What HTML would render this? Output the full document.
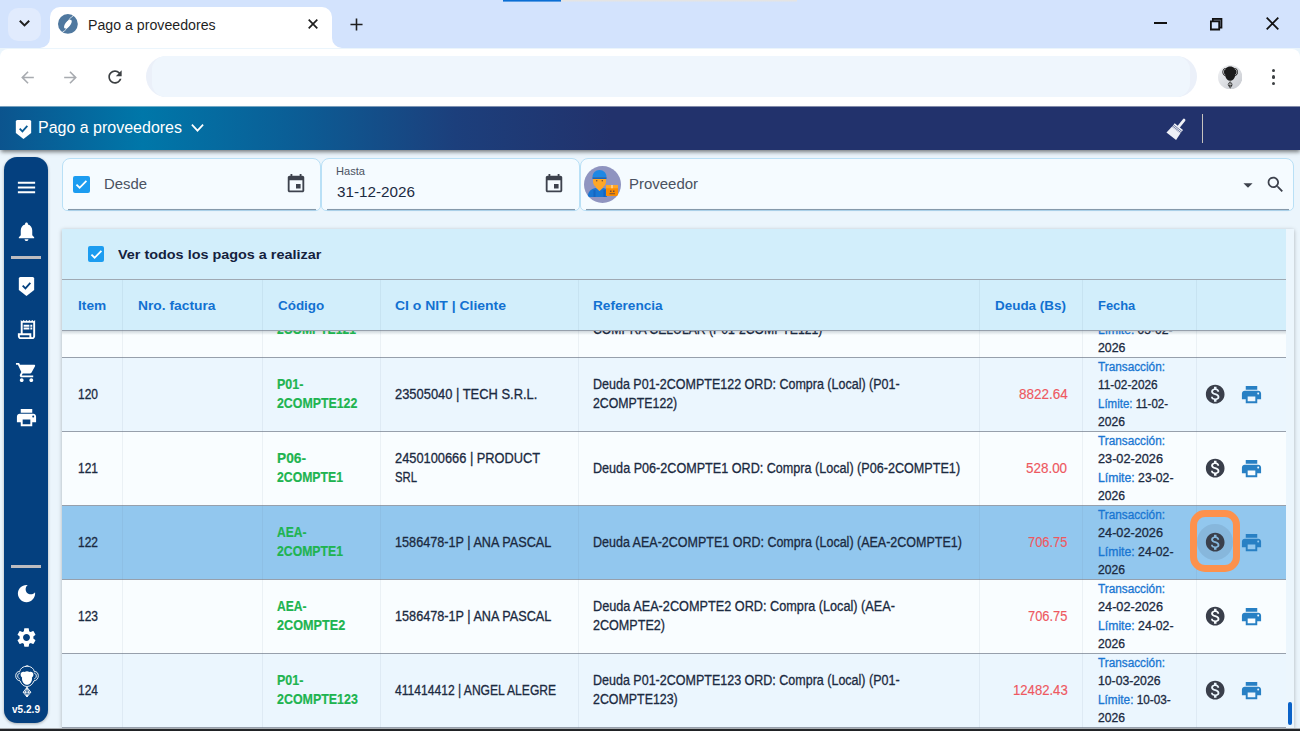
<!DOCTYPE html>
<html lang="es">
<head>
<meta charset="utf-8">
<title>Pago a proveedores</title>
<style>
*{box-sizing:border-box;margin:0;padding:0}
html,body{width:1300px;height:731px;overflow:hidden}
body{position:relative;background:#ebf5fc;font-family:"Liberation Sans",sans-serif;color:#1b2a41}
.abs{position:absolute}
.t{position:absolute;white-space:nowrap;transform-origin:0 50%;line-height:1}
svg{position:absolute;display:block}
#strip{left:0;top:0;width:1300px;height:48px;background:#d3e3fd}
#toolbar{left:0;top:48.500px;width:1300px;height:58px;background:#fff;border-radius:8px 8px 0 0}
#url{left:146.200px;top:55.800px;width:1051.200px;height:41.500px;border-radius:21px;background:#ebf0f9}
#tab{left:50px;top:7px;width:282px;height:41px;background:#fff;border-radius:10px 10px 0 0}
#tabsearch{left:8px;top:8px;width:33px;height:33px;border-radius:10px;background:#e1ebfd}
#hdr{left:0;top:107px;width:1300px;height:43px;background:linear-gradient(90deg,#0b548e 0%,#0077a9 11%,#0a5f97 22%,#1c3f7c 35%,#22326c 47%,#22326c 100%);box-shadow:0 2.500px 4px -.5px rgba(0,0,0,.5)}
#hdr0{left:0;top:106px;width:1300px;height:1px;background:linear-gradient(90deg,#0b548e 0%,#0077a9 11%,#0a5f97 22%,#1c3f7c 35%,#22326c 47%,#22326c 100%);opacity:.55}
#side{left:4px;top:157px;width:44px;height:566px;background:#04407f;border-radius:13px;box-shadow:0 1px 3px rgba(0,0,0,.3)}
.fld{position:absolute;top:158.300px;height:52.500px;background:#f5fbff;border:1px solid #b9e0f6;border-radius:8px 8px 5px 5px}
.fld::after{content:"";position:absolute;left:4.500px;right:4.500px;bottom:-.7px;height:1.900px;background:linear-gradient(#8f99a3,#7b99b2);box-shadow:0 .5px 1px rgba(120,150,180,.45)}
.cb{position:absolute;width:16.500px;height:16.500px;border-radius:2px;background:#1c9cf0}
#card{left:62px;top:228.500px;width:1231.600px;height:499.500px;background:#ecf6fd;box-shadow:0 1px 4px rgba(0,0,0,.28)}
.b,.f{-webkit-text-stroke:.3px currentColor}
.g{-webkit-text-stroke:.2px currentColor}
.r{-webkit-text-stroke:.15px currentColor}
</style>
</head>
<body>
<div class="abs" id="strip"></div>
<div class="abs" style="left:503px;top:0;width:58.400px;height:2px;background:linear-gradient(#0a6ed4 50%,rgba(10,110,212,.6) 50%)"></div>
<div class="abs" style="left:561.400px;top:0;width:235.600px;height:2px;background:linear-gradient(#e4e4e4 50%,rgba(228,228,228,.5) 50%)"></div>
<div class="abs" id="tabsearch"></div>
<svg style="left:17px;top:17px" width="15" height="13" viewBox="0 0 15 13"><path fill="none" stroke="#1f1f1f" stroke-width="2" d="M2.800 3.700l4.700 4.700 4.700-4.700"/></svg>
<div class="abs" id="tab"></div>
<svg style="left:40px;top:38px" width="10" height="10" viewBox="0 0 10 10"><path fill="#fff" d="M10 0v10H0A10 10 0 0 0 10 0z"/></svg>
<svg style="left:332px;top:38px" width="10" height="10" viewBox="0 0 10 10"><path fill="#fff" d="M0 0v10h10A10 10 0 0 1 0 0z"/></svg>
<div class="abs" id="toolbar"></div>
<div class="abs" id="url"></div>
<div class="abs" style="left:151.500px;top:55.800px;width:1038px;height:41.500px;border-radius:14px;background:#eff6fd"></div>
<svg style="left:58.300px;top:14.200px" width="19.800" height="19.800" viewBox="0 0 20 20"><circle cx="10" cy="10" r="10" fill="#4f789f"/><ellipse cx="10" cy="10.200" rx="5.400" ry="2.500" fill="#fff" transform="rotate(-51 10 10.200)"/><path stroke="#fff" stroke-width=".8" fill="none" d="M16 1.300C13 3 10.500 6 9.500 9M4.600 18.200C7.500 16.800 9.700 14 10.600 11.200"/></svg>
<span class="t " style="left:88.1px;top:18.17px;font-size:14px;color:#1f1f1f;transform:scaleX(1.0119);">Pago a proveedores</span>
<svg style="left:307px;top:18px" width="12" height="12" viewBox="0 0 12 12"><path stroke="#1f1f1f" stroke-width="1.700" d="M1.700 1.700l8.600 8.600M10.300 1.700l-8.600 8.600"/></svg>
<svg style="left:349.500px;top:17.500px" width="13" height="13" viewBox="0 0 14 14"><path stroke="#1f1f1f" stroke-width="1.700" d="M7 .5v13M.5 7h13"/></svg>
<div class="abs" style="left:1154.200px;top:22.200px;width:12.800px;height:1.900px;background:#111"></div>
<svg style="left:1208.800px;top:16.800px" width="14.400" height="14.400" viewBox="0 0 14.400 14.400"><path fill="#7a8596" stroke="#111" stroke-width="1.700" d="M3.800 1.900h8.700v8.700H3.800z"/><path fill="#d3e3fd" stroke="#111" stroke-width="1.800" d="M1.900 4.400h8.300v8.100H1.900z"/></svg>
<svg style="left:1266px;top:17.300px" width="13" height="13" viewBox="0 0 13 13"><path stroke="#111" stroke-width="1.800" d="M.7.700l11.600 11.600M12.300.700L.700 12.300"/></svg>
<svg style="left:17.50px;top:67.50px" width="19" height="19" viewBox="0 0 24 24"><path fill="#a8abb0" d="M20 11H7.83l5.59-5.59L12 4l-8 8 8 8 1.41-1.41L7.83 13H20v-2z"/></svg>
<svg style="left:60.50px;top:67.50px" width="19" height="19" viewBox="0 0 24 24"><path fill="#a8abb0" d="M12 4l-1.41 1.41L16.17 11H4v2h12.17l-5.58 5.59L12 20l8-8z"/></svg>
<svg style="left:104.50px;top:67.00px" width="20" height="20" viewBox="0 0 24 24"><path fill="#3c4043" d="M17.65 6.35C16.2 4.9 14.21 4 12 4c-4.42 0-7.99 3.58-7.990 8s3.570 8 7.990 8c3.730 0 6.840-2.550 7.730-6h-2.080c-.82 2.330-3.040 4-5.650 4-3.310 0-6-2.690-6-6s2.690-6 6-6c1.660 0 3.140.69 4.220 1.780L13 11h7V4l-2.350 2.350z"/></svg>
<svg style="left:1217.600px;top:64.500px" width="24.400" height="24.400" viewBox="0 0 24 24"><defs><linearGradient id="ag" x1="0" y1="0" x2="1" y2="1"><stop offset="0" stop-color="#f3f4f6"/><stop offset="1" stop-color="#c6c9cf"/></linearGradient></defs><circle cx="12" cy="12" r="12" fill="url(#ag)"/><path fill="#1b1b1b" d="M12 1.400c-1.700 0-3.100.6-4.100 1.600C5.800 2.900 4.300 4.600 4.300 7c0 2 1.200 3.500 2.900 4.100.6 2.700 2.500 4.500 4.800 4.500s4.200-1.800 4.800-4.500c1.700-.6 2.900-2.100 2.900-4.100 0-2.400-1.500-4.100-3.600-4-1-1-2.400-1.600-4.100-1.600z"/><path fill="none" stroke="#e4e5e8" stroke-width=".7" d="M7.600 3.800C6 4.200 5.400 5.500 5.400 6.900c0 1.400.7 2.400 1.800 3M16.400 3.800c1.600.4 2.200 1.700 2.200 3.100 0 1.400-.7 2.400-1.800 3"/><path fill="#2a2a2a" d="M12 15.800l2.600 3.400L12 23.400l-2.600-4.200z"/><path fill="none" stroke="#d8d9dc" stroke-width=".5" d="M9.400 19.200h5.200M12 15.800v7.600M10.700 17.500l1.300 1.700 1.300-1.700"/></svg>
<div class="abs" style="left:1272px;top:68.9px;width:3.400px;height:3.400px;border-radius:50%;background:#3c4043"></div>
<div class="abs" style="left:1272px;top:75.4px;width:3.400px;height:3.400px;border-radius:50%;background:#3c4043"></div>
<div class="abs" style="left:1272px;top:82.0px;width:3.400px;height:3.400px;border-radius:50%;background:#3c4043"></div>
<div class="abs" id="hdr0"></div>
<div class="abs" id="hdr"></div>
<svg style="left:12.40px;top:117.60px" width="23" height="23" viewBox="0 0 24 24"><path fill="#fff" d="M5.600 2h12.800A1.600 1.600 0 0 1 20 3.600V15.600L12 22l-8-6.400V3.600A1.600 1.600 0 0 1 5.600 2z"/><path fill="none" stroke="#0a5c95" stroke-width="1.900" d="M8 11l2.900 2.900L16 8.300"/></svg>
<span class="t " style="left:37.6px;top:120.48px;font-size:16px;color:#fff;transform:scaleX(0.9992);">Pago a proveedores</span>
<svg style="left:190px;top:122px" width="15" height="13" viewBox="0 0 15 13"><path fill="none" stroke="#fff" stroke-width="1.700" d="M1.900 2.700l5.600 6 5.600-6"/></svg>
<svg style="left:1156.600px;top:109.100px;overflow:visible" width="40" height="40" viewBox="-20 -20 40 40"><g transform="rotate(38)" fill="#eef0f6"><rect x="-1.400" y="-12.800" width="2.800" height="11" rx="1.400"/><path d="M-5.300 -3h10.600v4.500h-10.600z"/><path d="M-5.400 1.500h10.800l.7 7.800h-12.200z"/><path fill="none" stroke="#22326c" stroke-width=".55" d="M-5.300-1.100h10.600M-5.300 .400h10.600"/></g></svg>
<div class="abs" style="left:1201.600px;top:113.700px;width:1.700px;height:29.200px;background:#c6c3be"></div>
<div class="abs" id="side"></div>
<svg style="left:15.00px;top:175.80px" width="23" height="23" viewBox="0 0 24 24"><path fill="#fff" d="M3 18h18v-2H3v2zm0-5h18v-2H3v2zm0-7v2h18V6H3z"/></svg>
<svg style="left:15.00px;top:220.00px" width="23" height="23" viewBox="0 0 24 24"><path fill="#fff" d="M12 22c1.1 0 2-.9 2-2h-4c0 1.1.89 2 2 2zm6-6v-5c0-3.07-1.64-5.64-4.5-6.320V4c0-.83-.67-1.500-1.500-1.500s-1.500.67-1.500 1.500v.68C7.630 5.360 6 7.920 6 11v5l-2 2v1h16v-1l-2-2z"/></svg>
<div class="abs" style="left:11px;top:256px;width:30px;height:3px;background:#bdbcc0"></div>
<svg style="left:15.00px;top:274.80px" width="23" height="23" viewBox="0 0 24 24"><path fill="#fff" d="M5.600 2h12.800A1.600 1.600 0 0 1 20 3.600V15.600L12 22l-8-6.400V3.600A1.600 1.600 0 0 1 5.600 2z"/><path fill="none" stroke="#04407f" stroke-width="1.900" d="M8 11l2.900 2.900L16 8.300"/></svg>
<svg style="left:15.00px;top:317.50px" width="23" height="23" viewBox="0 0 24 24"><path fill="#fff" d="M19.500 3.500L18 2l-1.500 1.500L15 2l-1.500 1.500L12 2l-1.500 1.500L9 2 7.500 3.500 6 2v14H3v3c0 1.660 1.340 3 3 3h12c1.660 0 3-1.340 3-3V2l-1.500 1.500zM15 20H6c-.55 0-1-.45-1-1v-1h10v2zm4-1c0 .55-.45 1-1 1s-1-.45-1-1v-3H8V5h11v14z M9 7h6v2H9zm7 0h2v2h-2zm-7 3h6v2H9zm7 0h2v2h-2z"/></svg>
<svg style="left:14.60px;top:361.30px" width="23" height="23" viewBox="0 0 24 24"><path fill="#fff" d="M7 18c-1.100 0-1.990.9-1.990 2S5.900 22 7 22s2-.9 2-2-.9-2-2-2zM1 2v2h2l3.600 7.590-1.350 2.450c-.16.28-.25.61-.25.96 0 1.100.9 2 2 2h12v-2H7.420c-.14 0-.25-.11-.25-.25l.03-.12.9-1.630h7.450c.75 0 1.410-.41 1.750-1.030l3.580-6.490c.08-.14.12-.31.12-.48 0-.55-.45-1-1-1H5.210l-.94-2H1zm16 16c-1.100 0-1.990.9-1.990 2s.89 2 1.990 2 2-.9 2-2-.9-2-2-2z"/></svg>
<svg style="left:15.00px;top:405.80px" width="23" height="23" viewBox="0 0 24 24"><path fill="#fff" d="M19 8H5c-1.66 0-3 1.34-3 3v6h4v4h12v-4h4v-6c0-1.66-1.34-3-3-3zm-3 11H8v-5h8v5zm3-7c-.55 0-1-.45-1-1s.45-1 1-1 1 .45 1 1-.45 1-1 1zm-1-9H6v4h12V3z"/></svg>
<div class="abs" style="left:11px;top:565px;width:30px;height:3px;background:#bdbcc0"></div>
<svg style="left:15.00px;top:582.40px" width="23" height="23" viewBox="0 0 24 24"><path fill="#fff" d="M12 3c-4.970 0-9 4.030-9 9s4.030 9 9 9 9-4.030 9-9c0-.46-.04-.92-.1-1.360-.98 1.370-2.580 2.260-4.400 2.260-2.980 0-5.400-2.420-5.400-5.400 0-1.810.89-3.420 2.260-4.400-.44-.06-.9-.1-1.360-.1z"/></svg>
<svg style="left:15.00px;top:626.40px" width="23" height="23" viewBox="0 0 24 24"><path fill="#fff" d="M19.140 12.940c.04-.3.060-.61.060-.94 0-.32-.02-.64-.07-.94l2.030-1.580c.18-.14.23-.41.120-.61l-1.920-3.320c-.12-.22-.37-.29-.59-.22l-2.390.96c-.5-.38-1.030-.7-1.620-.94l-.36-2.540c-.04-.24-.24-.41-.48-.41h-3.840c-.24 0-.43.17-.47.41l-.36 2.540c-.59.24-1.130.57-1.620.94l-2.390-.96c-.22-.08-.47 0-.59.220L2.740 8.870c-.12.21-.08.47.120.61l2.030 1.580c-.05.3-.09.63-.09.940s.02.640.07.940l-2.030 1.580c-.18.140-.23.410-.120.610l1.920 3.320c.12.220.37.290.59.220l2.390-.96c.5.380 1.030.7 1.620.94l.36 2.540c.05.240.24.410.48.410h3.840c.24 0 .44-.17.470-.41l.36-2.540c.59-.24 1.130-.56 1.620-.94l2.390.96c.22.080.47 0 .59-.22l1.920-3.320c.12-.22.070-.47-.12-.61l-2.010-1.580zM12 15.600c-1.980 0-3.600-1.620-3.600-3.600s1.620-3.600 3.600-3.600 3.600 1.620 3.600 3.600-1.620 3.600-3.600 3.600z"/></svg>
<svg style="left:14.500px;top:665px" width="24" height="32.500" viewBox="0 0 24 32.500"><g fill="none" stroke="#fff" stroke-width=".9"><path d="M12 1.200c-4 0-6.800 2.300-7.300 5.300C2.300 6.300.700 8.200.700 10.800c0 2.800 1.800 4.800 4.300 5 1.300 3.500 3.900 5.700 7 5.700s5.700-2.200 7-5.700c2.500-.2 4.300-2.200 4.300-5 0-2.600-1.600-4.500-4-4.300C18.800 3.500 16 1.200 12 1.200z"/><path d="M5.200 8c-1.600.2-2.500 1.300-2.500 2.900 0 1.500.8 2.600 2 3M18.800 8c1.600.2 2.500 1.300 2.500 2.900 0 1.500-.8 2.600-2 3"/><path d="M10 1.800c1-.9 2.400-1.300 3.300-1"/><path d="M12 22.300l-3.800 4.900L12 32l3.800-4.800zM8.200 27.200h7.600M12 22.300l-1.600 4.900L12 32l1.600-4.800z"/></g><path fill="#fff" d="M12 6.300c-.9 0-1.700.3-2.300.8-.4-.2-.8-.3-1.300-.3C6.800 6.800 5.600 8 5.600 9.700c0 1.200.6 2.200 1.500 2.700-.1.500-.1.900-.1 1.400 0 3.300 2.200 6 5 6s5-2.700 5-6c0-.5 0-.9-.1-1.400.9-.5 1.500-1.500 1.500-2.700 0-1.700-1.200-2.900-2.800-2.900-.5 0-.9.100-1.300.3-.6-.5-1.400-.8-2.300-.8z"/></svg>
<span class="t " style="left:12.3px;top:704.55px;font-size:10px;color:#fff;font-weight:700;transform:scaleX(1.0067);">v5.2.9</span>
<div class="fld" style="left:62px;width:259px"></div>
<div class="fld" style="left:321px;width:259px"></div>
<div class="fld" style="left:580px;width:714.300px"></div>
<div class="cb" style="left:73px;top:176px"><svg style="left:0;top:0" width="16.500" height="16.500" viewBox="0 0 24 24"><path fill="none" stroke="#fff" stroke-width="2.600" d="M5 12.500l4.600 4.600L19.500 7"/></svg></div>
<span class="t " style="left:103.5px;top:176.75px;font-size:14.5px;color:#4a5261;transform:scaleX(1.0257);">Desde</span>
<svg style="left:285.00px;top:173.40px" width="22" height="22" viewBox="0 0 24 24"><path fill="#3d424d" d="M17 12h-5v5h5v-5zM16 1v2H8V1H6v2H5c-1.11 0-1.99.9-1.99 2L3 19c0 1.1.89 2 2 2h14c1.1 0 2-.9 2-2V5c0-1.1-.9-2-2-2h-1V1h-2zm3 18H5V8h14v11z"/></svg>
<span class="t " style="left:336px;top:165.71px;font-size:11px;color:#4a5261;transform:scaleX(1.0087);">Hasta</span>
<span class="t " style="left:336.5px;top:184.32px;font-size:15px;color:#1b2a41;transform:scaleX(1.0165);">31-12-2026</span>
<svg style="left:543.00px;top:173.40px" width="22" height="22" viewBox="0 0 24 24"><path fill="#3d424d" d="M17 12h-5v5h5v-5zM16 1v2H8V1H6v2H5c-1.11 0-1.99.9-1.99 2L3 19c0 1.1.89 2 2 2h14c1.1 0 2-.9 2-2V5c0-1.1-.9-2-2-2h-1V1h-2zm3 18H5V8h14v11z"/></svg>
<svg style="left:583.800px;top:166px" width="37" height="37" viewBox="0 0 37 37"><defs><clipPath id="cp"><circle cx="18.500" cy="18.500" r="18.500"/></clipPath></defs><circle cx="18.500" cy="18.500" r="18.500" fill="#8f94c0"/><g clip-path="url(#cp)"><path fill="#1976d2" d="M4 30c0-5 4-7.500 8-8l3.500 3 3.500-3c1.500.2 3 .7 4 1.500V31H4z"/><path fill="#1565c0" d="M9.500 24h2v7h-2zm10 0h2v7h-2z"/><path fill="#ffa726" d="M12 21.500l3.500 3.500 3.500-3.500v-3h-7z"/><path fill="#ffa726" d="M9 11h13v4.500c0 3.600-2.900 6.500-6.500 6.500S9 19.100 9 15.500z"/><path fill="#1e88e5" d="M8.500 11c0-4 3-7 7-7s7 3 7 7v.5h-14z"/><path fill="#1565c0" d="M8.500 11.300h14V13h-14z"/><circle cx="12.700" cy="14.800" r=".8" fill="#6d4c41"/><circle cx="18.300" cy="14.800" r=".8" fill="#6d4c41"/><path fill="#fb8c00" d="M22 19h12v11H22z"/><path fill="#ffa726" d="M22 19h12v3.200H22z"/><path fill="#ffcc80" d="M27 19h2v3.200h-2z"/><path fill="#6d4c41" d="M26 24.500h1.500V26H26zm3 0h1.500V26H29zM25.500 27.300h5.500v.9h-5.500z"/></g></svg>
<span class="t " style="left:629px;top:176.75px;font-size:14.5px;color:#4a5261;transform:scaleX(1.0313);">Proveedor</span>
<svg style="left:1237.00px;top:173.50px" width="22" height="22" viewBox="0 0 24 24"><path fill="#3d424d" d="M7 10l5 5 5-5z"/></svg>
<svg style="left:1264.50px;top:174.00px" width="21" height="21" viewBox="0 0 24 24"><path fill="#3d424d" d="M15.5 14h-.79l-.28-.27C15.41 12.59 16 11.11 16 9.5 16 5.91 13.09 3 9.500 3S3 5.910 3 9.500 5.910 16 9.500 16c1.610 0 3.090-.59 4.230-1.570l.27.28v.79l5 4.990L20.490 19l-4.990-5zm-6 0C7.010 14 5 11.990 5 9.500S7.010 5 9.500 5 14 7.010 14 9.500 11.990 14 9.500 14z"/></svg>
<div class="abs" id="card"></div>
<div class="abs" style="left:62px;top:228.500px;width:1223.700px;height:499.500px;background:#d2eefb"></div>
<div class="abs" style="left:62px;top:331px;width:1224px;height:26px;background:#f9fdff"></div>
<div class="abs" style="left:62px;top:358px;width:1224px;height:73px;background:#ebf6fe"></div>
<div class="abs" style="left:62px;top:432px;width:1224px;height:73px;background:#f9fdff"></div>
<div class="abs" style="left:62px;top:506px;width:1224px;height:73px;background:#92c7ee"></div>
<div class="abs" style="left:62px;top:580px;width:1224px;height:73px;background:#f9fdff"></div>
<div class="abs" style="left:62px;top:654px;width:1224px;height:73px;background:#ebf6fe"></div>
<div class="abs" style="left:62px;top:727px;width:1224px;height:1px;background:#ebf6fe"></div>
<div class="abs" style="left:62px;top:279px;width:1224px;height:1px;background:#9fa9b3"></div>
<div class="abs" style="left:62px;top:330px;width:1224px;height:1px;background:#97a0ac"></div>
<div class="abs" style="left:62px;top:357px;width:1224px;height:1px;background:#97a0ac"></div>
<div class="abs" style="left:62px;top:431px;width:1224px;height:1px;background:#97a0ac"></div>
<div class="abs" style="left:62px;top:505px;width:1224px;height:1px;background:#97a0ac"></div>
<div class="abs" style="left:62px;top:579px;width:1224px;height:1px;background:#97a0ac"></div>
<div class="abs" style="left:62px;top:653px;width:1224px;height:1px;background:#97a0ac"></div>
<div class="abs" style="left:62px;top:727px;width:1224px;height:1px;background:#97a0ac"></div>
<div class="abs" style="left:62px;top:331px;width:1223.700px;height:4px;background:linear-gradient(rgba(60,80,100,.22),rgba(60,80,100,0))"></div>
<div class="abs" style="left:122px;top:280px;width:1px;height:448px;background:rgba(90,115,140,.085)"></div>
<div class="abs" style="left:262px;top:280px;width:1px;height:448px;background:rgba(90,115,140,.085)"></div>
<div class="abs" style="left:380px;top:280px;width:1px;height:448px;background:rgba(90,115,140,.085)"></div>
<div class="abs" style="left:578px;top:280px;width:1px;height:448px;background:rgba(90,115,140,.085)"></div>
<div class="abs" style="left:979px;top:280px;width:1px;height:448px;background:rgba(90,115,140,.085)"></div>
<div class="abs" style="left:1082px;top:280px;width:1px;height:448px;background:rgba(90,115,140,.085)"></div>
<div class="abs" style="left:1196px;top:280px;width:1px;height:448px;background:rgba(90,115,140,.085)"></div>
<div class="cb" style="left:87.600px;top:245.900px"><svg style="left:0;top:0" width="16.500" height="16.500" viewBox="0 0 24 24"><path fill="none" stroke="#fff" stroke-width="2.600" d="M5 12.500l4.600 4.600L19.500 7"/></svg></div>
<span class="t hd" style="left:118px;top:247.59px;font-size:13.5px;color:#14213d;font-weight:700;transform:scaleX(1.0668);">Ver todos los pagos a realizar</span>
<span class="t hd" style="left:78.1px;top:299.02px;font-size:13px;color:#1271d1;font-weight:700;transform:scaleX(1.0548);">Item</span>
<span class="t hd" style="left:138px;top:299.02px;font-size:13px;color:#1271d1;font-weight:700;transform:scaleX(1.0621);">Nro. factura</span>
<span class="t hd" style="left:277.8px;top:299.02px;font-size:13px;color:#1271d1;font-weight:700;transform:scaleX(1.032);">Código</span>
<span class="t hd" style="left:395px;top:299.02px;font-size:13px;color:#1271d1;font-weight:700;transform:scaleX(1.0744);">CI o NIT | Cliente</span>
<span class="t hd" style="left:593.2px;top:299.02px;font-size:13px;color:#1271d1;font-weight:700;transform:scaleX(1.0484);">Referencia</span>
<span class="t hd" style="left:995px;top:299.02px;font-size:13px;color:#1271d1;font-weight:700;transform:scaleX(1.0346);">Deuda (Bs)</span>
<span class="t hd" style="left:1098.1px;top:299.02px;font-size:13px;color:#1271d1;font-weight:700;transform:scaleX(0.9926);">Fecha</span>
<span class="t b" style="left:77.6px;top:387.17px;font-size:14px;color:#1b2a41;transform:scaleX(0.8562);">120</span>
<span class="t g" style="left:277.2px;top:377.17px;font-size:14px;color:#1eb450;font-weight:700;transform:scaleX(0.8926);">P01-</span><span class="t g" style="left:277.2px;top:396.17px;font-size:14px;color:#1eb450;font-weight:700;transform:scaleX(0.882);">2COMPTE122</span>
<span class="t b" style="left:395px;top:387.17px;font-size:14px;color:#1b2a41;transform:scaleX(0.9219);">23505040 | TECH S.R.L.</span>
<span class="t b" style="left:593.3px;top:377.17px;font-size:14px;color:#1b2a41;transform:scaleX(0.8938);">Deuda P01-2COMPTE122 ORD: Compra (Local) (P01-</span><span class="t b" style="left:593.3px;top:396.17px;font-size:14px;color:#1b2a41;transform:scaleX(0.8798);">2COMPTE122)</span>
<span class="t r" style="left:1018.5px;top:387.17px;font-size:14px;color:#ee5860;transform:scaleX(0.9642);">8822.64</span>
<span class="t f" style="left:1098.2px;top:360.86px;font-size:12px;color:#1976d2;transform:scaleX(0.9817);">Transacción:</span>
<span class="t f" style="left:1098.2px;top:378.86px;font-size:12px;color:#1b2a41;transform:scaleX(0.9868);">11-02-2026</span>
<span class="t f" style="left:1098.2px;top:397.86px;font-size:12px;color:#1b2a41;transform:scaleX(0.9569);"><span style="color:#1976d2">Límite:</span> 11-02-</span>
<span class="t f" style="left:1098.2px;top:415.86px;font-size:12px;color:#1b2a41;transform:scaleX(1.0111);">2026</span>
<svg style="left:1203.80px;top:383.20px" width="22.4" height="22.4" viewBox="0 0 24 24"><path fill="#3a3f4b" d="M12 2C6.48 2 2 6.48 2 12s4.48 10 10 10 10-4.48 10-10S17.52 2 12 2zm1.41 16.09V20h-2.67v-1.93c-1.71-.36-3.16-1.46-3.27-3.4h1.96c.1 1.05.82 1.87 2.65 1.87 1.96 0 2.4-.98 2.4-1.59 0-.83-.44-1.61-2.67-2.14-2.48-.6-4.18-1.62-4.18-3.67 0-1.72 1.39-2.84 3.11-3.21V4h2.67v1.95c1.86.45 2.79 1.86 2.85 3.39H14.3c-.05-1.11-.64-1.87-2.22-1.87-1.5 0-2.4.68-2.4 1.64 0 .84.65 1.39 2.67 1.91s4.18 1.39 4.18 3.91c-.01 1.83-1.38 2.83-3.12 3.16z"/></svg>
<svg style="left:1240.20px;top:382.70px" width="23" height="23" viewBox="0 0 24 24"><path fill="#2880c4" d="M19 8H5c-1.66 0-3 1.34-3 3v6h4v4h12v-4h4v-6c0-1.66-1.34-3-3-3zm-3 11H8v-5h8v5zm3-7c-.55 0-1-.45-1-1s.45-1 1-1 1 .45 1 1-.45 1-1 1zm-1-9H6v4h12V3z"/></svg>
<span class="t b" style="left:77.6px;top:461.17px;font-size:14px;color:#1b2a41;transform:scaleX(0.8562);">121</span>
<span class="t g" style="left:277.2px;top:451.17px;font-size:14px;color:#1eb450;font-weight:700;transform:scaleX(0.9805);">P06-</span><span class="t g" style="left:277.2px;top:470.17px;font-size:14px;color:#1eb450;font-weight:700;transform:scaleX(0.8745);">2COMPTE1</span>
<span class="t b" style="left:395px;top:451.17px;font-size:14px;color:#1b2a41;transform:scaleX(0.9161);">2450100666 | PRODUCT</span><span class="t b" style="left:395px;top:470.17px;font-size:14px;color:#1b2a41;transform:scaleX(0.8078);">SRL</span>
<span class="t b" style="left:593.3px;top:461.17px;font-size:14px;color:#1b2a41;transform:scaleX(0.9004);">Deuda P06-2COMPTE1 ORD: Compra (Local) (P06-2COMPTE1)</span>
<span class="t r" style="left:1026.2px;top:461.17px;font-size:14px;color:#ee5860;transform:scaleX(0.9596);">528.00</span>
<span class="t f" style="left:1098.2px;top:434.86px;font-size:12px;color:#1976d2;transform:scaleX(0.9817);">Transacción:</span>
<span class="t f" style="left:1098.2px;top:452.86px;font-size:12px;color:#1b2a41;transform:scaleX(1.0588);">23-02-2026</span>
<span class="t f" style="left:1098.2px;top:471.86px;font-size:12px;color:#1b2a41;transform:scaleX(1.0196);"><span style="color:#1976d2">Límite:</span> 23-02-</span>
<span class="t f" style="left:1098.2px;top:489.86px;font-size:12px;color:#1b2a41;transform:scaleX(1.0111);">2026</span>
<svg style="left:1203.80px;top:457.20px" width="22.4" height="22.4" viewBox="0 0 24 24"><path fill="#3a3f4b" d="M12 2C6.48 2 2 6.48 2 12s4.48 10 10 10 10-4.48 10-10S17.52 2 12 2zm1.41 16.09V20h-2.67v-1.93c-1.71-.36-3.16-1.46-3.27-3.4h1.96c.1 1.05.82 1.87 2.65 1.87 1.96 0 2.4-.98 2.4-1.59 0-.83-.44-1.61-2.67-2.14-2.48-.6-4.18-1.62-4.18-3.67 0-1.72 1.39-2.84 3.11-3.21V4h2.67v1.95c1.86.45 2.79 1.86 2.85 3.39H14.3c-.05-1.11-.64-1.87-2.22-1.87-1.5 0-2.4.68-2.4 1.64 0 .84.65 1.39 2.67 1.91s4.18 1.39 4.18 3.91c-.01 1.83-1.38 2.83-3.12 3.16z"/></svg>
<svg style="left:1240.20px;top:456.70px" width="23" height="23" viewBox="0 0 24 24"><path fill="#2880c4" d="M19 8H5c-1.66 0-3 1.34-3 3v6h4v4h12v-4h4v-6c0-1.66-1.34-3-3-3zm-3 11H8v-5h8v5zm3-7c-.55 0-1-.45-1-1s.45-1 1-1 1 .45 1 1-.45 1-1 1zm-1-9H6v4h12V3z"/></svg>
<span class="t b" style="left:77.6px;top:535.17px;font-size:14px;color:#1b2a41;transform:scaleX(0.8562);">122</span>
<span class="t g" style="left:277.2px;top:525.17px;font-size:14px;color:#1eb450;font-weight:700;transform:scaleX(0.8617);">AEA-</span><span class="t g" style="left:277.2px;top:544.17px;font-size:14px;color:#1eb450;font-weight:700;transform:scaleX(0.8745);">2COMPTE1</span>
<span class="t b" style="left:395px;top:535.17px;font-size:14px;color:#1b2a41;transform:scaleX(0.9045);">1586478-1P | ANA PASCAL</span>
<span class="t b" style="left:593.3px;top:535.17px;font-size:14px;color:#1b2a41;transform:scaleX(0.893);">Deuda AEA-2COMPTE1 ORD: Compra (Local) (AEA-2COMPTE1)</span>
<span class="t r" style="left:1027.8999999999999px;top:535.17px;font-size:14px;color:#ee5860;transform:scaleX(0.92);">706.75</span>
<span class="t f" style="left:1098.2px;top:508.86px;font-size:12px;color:#1976d2;transform:scaleX(0.9817);">Transacción:</span>
<span class="t f" style="left:1098.2px;top:526.86px;font-size:12px;color:#1b2a41;transform:scaleX(1.0588);">24-02-2026</span>
<span class="t f" style="left:1098.2px;top:545.86px;font-size:12px;color:#1b2a41;transform:scaleX(1.0196);"><span style="color:#1976d2">Límite:</span> 24-02-</span>
<span class="t f" style="left:1098.2px;top:563.86px;font-size:12px;color:#1b2a41;transform:scaleX(1.0111);">2026</span>
<div class="abs" style="left:1197px;top:524px;width:36px;height:36px;border-radius:50%;background:rgba(60,80,100,.13)"></div>
<svg style="left:1203.80px;top:531.20px" width="22.4" height="22.4" viewBox="0 0 24 24"><path fill="#3a3f4b" d="M12 2C6.48 2 2 6.48 2 12s4.48 10 10 10 10-4.48 10-10S17.52 2 12 2zm1.41 16.09V20h-2.67v-1.93c-1.71-.36-3.16-1.46-3.27-3.4h1.96c.1 1.05.82 1.87 2.65 1.87 1.96 0 2.4-.98 2.4-1.59 0-.83-.44-1.61-2.67-2.14-2.48-.6-4.18-1.62-4.18-3.67 0-1.72 1.39-2.84 3.11-3.21V4h2.67v1.95c1.86.45 2.79 1.86 2.85 3.39H14.3c-.05-1.11-.64-1.87-2.22-1.87-1.5 0-2.4.68-2.4 1.64 0 .84.65 1.39 2.67 1.91s4.18 1.39 4.18 3.91c-.01 1.83-1.38 2.83-3.12 3.16z"/></svg>
<svg style="left:1240.20px;top:530.70px" width="23" height="23" viewBox="0 0 24 24"><path fill="#2880c4" d="M19 8H5c-1.66 0-3 1.34-3 3v6h4v4h12v-4h4v-6c0-1.66-1.34-3-3-3zm-3 11H8v-5h8v5zm3-7c-.55 0-1-.45-1-1s.45-1 1-1 1 .45 1 1-.45 1-1 1zm-1-9H6v4h12V3z"/></svg>
<span class="t b" style="left:77.6px;top:609.17px;font-size:14px;color:#1b2a41;transform:scaleX(0.8562);">123</span>
<span class="t g" style="left:277.2px;top:599.17px;font-size:14px;color:#1eb450;font-weight:700;transform:scaleX(0.8617);">AEA-</span><span class="t g" style="left:277.2px;top:618.17px;font-size:14px;color:#1eb450;font-weight:700;transform:scaleX(0.9037);">2COMPTE2</span>
<span class="t b" style="left:395px;top:609.17px;font-size:14px;color:#1b2a41;transform:scaleX(0.9045);">1586478-1P | ANA PASCAL</span>
<span class="t b" style="left:593.3px;top:599.17px;font-size:14px;color:#1b2a41;transform:scaleX(0.9066);">Deuda AEA-2COMPTE2 ORD: Compra (Local) (AEA-</span><span class="t b" style="left:593.3px;top:618.17px;font-size:14px;color:#1b2a41;transform:scaleX(0.8986);">2COMPTE2)</span>
<span class="t r" style="left:1027.8999999999999px;top:609.17px;font-size:14px;color:#ee5860;transform:scaleX(0.92);">706.75</span>
<span class="t f" style="left:1098.2px;top:582.86px;font-size:12px;color:#1976d2;transform:scaleX(0.9817);">Transacción:</span>
<span class="t f" style="left:1098.2px;top:600.86px;font-size:12px;color:#1b2a41;transform:scaleX(1.0588);">24-02-2026</span>
<span class="t f" style="left:1098.2px;top:619.86px;font-size:12px;color:#1b2a41;transform:scaleX(1.0196);"><span style="color:#1976d2">Límite:</span> 24-02-</span>
<span class="t f" style="left:1098.2px;top:637.86px;font-size:12px;color:#1b2a41;transform:scaleX(1.0111);">2026</span>
<svg style="left:1203.80px;top:605.20px" width="22.4" height="22.4" viewBox="0 0 24 24"><path fill="#3a3f4b" d="M12 2C6.48 2 2 6.48 2 12s4.48 10 10 10 10-4.48 10-10S17.52 2 12 2zm1.41 16.09V20h-2.67v-1.93c-1.71-.36-3.16-1.46-3.27-3.4h1.96c.1 1.05.82 1.87 2.65 1.87 1.96 0 2.4-.98 2.4-1.59 0-.83-.44-1.61-2.67-2.14-2.48-.6-4.18-1.62-4.18-3.67 0-1.72 1.39-2.84 3.11-3.21V4h2.67v1.95c1.86.45 2.79 1.86 2.85 3.39H14.3c-.05-1.11-.64-1.87-2.22-1.87-1.5 0-2.4.68-2.4 1.64 0 .84.65 1.39 2.67 1.91s4.18 1.39 4.18 3.91c-.01 1.83-1.38 2.83-3.12 3.16z"/></svg>
<svg style="left:1240.20px;top:604.70px" width="23" height="23" viewBox="0 0 24 24"><path fill="#2880c4" d="M19 8H5c-1.66 0-3 1.34-3 3v6h4v4h12v-4h4v-6c0-1.66-1.34-3-3-3zm-3 11H8v-5h8v5zm3-7c-.55 0-1-.45-1-1s.45-1 1-1 1 .45 1 1-.45 1-1 1zm-1-9H6v4h12V3z"/></svg>
<span class="t b" style="left:77.6px;top:683.17px;font-size:14px;color:#1b2a41;transform:scaleX(0.8562);">124</span>
<span class="t g" style="left:277.2px;top:673.17px;font-size:14px;color:#1eb450;font-weight:700;transform:scaleX(0.8926);">P01-</span><span class="t g" style="left:277.2px;top:692.17px;font-size:14px;color:#1eb450;font-weight:700;transform:scaleX(0.8875);">2COMPTE123</span>
<span class="t b" style="left:395px;top:683.17px;font-size:14px;color:#1b2a41;transform:scaleX(0.8636);">411414412 | ANGEL ALEGRE</span>
<span class="t b" style="left:593.3px;top:673.17px;font-size:14px;color:#1b2a41;transform:scaleX(0.8935);">Deuda P01-2COMPTE123 ORD: Compra (Local) (P01-</span><span class="t b" style="left:593.3px;top:692.17px;font-size:14px;color:#1b2a41;transform:scaleX(0.885);">2COMPTE123)</span>
<span class="t r" style="left:1012.5999999999999px;top:683.17px;font-size:14px;color:#ee5860;transform:scaleX(0.9365);">12482.43</span>
<span class="t f" style="left:1098.2px;top:656.86px;font-size:12px;color:#1976d2;transform:scaleX(0.9817);">Transacción:</span>
<span class="t f" style="left:1098.2px;top:674.86px;font-size:12px;color:#1b2a41;transform:scaleX(1.0181);">10-03-2026</span>
<span class="t f" style="left:1098.2px;top:693.86px;font-size:12px;color:#1b2a41;transform:scaleX(0.9832);"><span style="color:#1976d2">Límite:</span> 10-03-</span>
<span class="t f" style="left:1098.2px;top:711.86px;font-size:12px;color:#1b2a41;transform:scaleX(1.0111);">2026</span>
<svg style="left:1203.80px;top:679.20px" width="22.4" height="22.4" viewBox="0 0 24 24"><path fill="#3a3f4b" d="M12 2C6.48 2 2 6.48 2 12s4.48 10 10 10 10-4.48 10-10S17.52 2 12 2zm1.41 16.09V20h-2.67v-1.93c-1.71-.36-3.16-1.46-3.27-3.4h1.96c.1 1.05.82 1.87 2.65 1.87 1.96 0 2.4-.98 2.4-1.59 0-.83-.44-1.61-2.67-2.14-2.48-.6-4.18-1.62-4.18-3.67 0-1.72 1.39-2.84 3.11-3.21V4h2.67v1.95c1.86.45 2.79 1.86 2.85 3.39H14.3c-.05-1.11-.64-1.87-2.22-1.87-1.5 0-2.4.68-2.4 1.64 0 .84.65 1.39 2.67 1.91s4.18 1.39 4.18 3.91c-.01 1.83-1.38 2.83-3.12 3.16z"/></svg>
<svg style="left:1240.20px;top:678.70px" width="23" height="23" viewBox="0 0 24 24"><path fill="#2880c4" d="M19 8H5c-1.66 0-3 1.34-3 3v6h4v4h12v-4h4v-6c0-1.66-1.34-3-3-3zm-3 11H8v-5h8v5zm3-7c-.55 0-1-.45-1-1s.45-1 1-1 1 .45 1 1-.45 1-1 1zm-1-9H6v4h12V3z"/></svg>
<div class="abs" style="left:62px;top:331px;width:1224px;height:26px;overflow:hidden"><span class="t g" style="left:215.2px;top:-8.83px;font-size:14px;color:#1eb450;font-weight:700;transform:scaleX(0.8677);">2COMPTE121</span><span class="t b" style="left:531.3px;top:-8.83px;font-size:14px;color:#1b2a41;transform:scaleX(0.8723);">COMPRA CELULAR (P01-2COMPTE121)</span><span class="t f" style="left:1036.2px;top:-7.14px;font-size:12px;color:#1b2a41;transform:scaleX(1.0061);"><span style="color:#1976d2">Límite:</span> 05-02-</span><span class="t f" style="left:1036.2px;top:10.86px;font-size:12px;color:#1b2a41;transform:scaleX(1.0298);">2026</span></div>
<div class="abs" style="left:1190px;top:510px;width:50px;height:62px;border:7px solid #fd914c;border-radius:15px"></div>
<div class="abs" style="left:1287.900px;top:701.500px;width:4px;height:23.600px;border-radius:2px;background:#0a62c8"></div>
<div class="abs" style="left:0;top:728px;width:1300px;height:3px;background:linear-gradient(#c4c8cc 0,#8d9196 33%,#26282b 45%,#1d1f22 100%)"></div>
</body>
</html>
